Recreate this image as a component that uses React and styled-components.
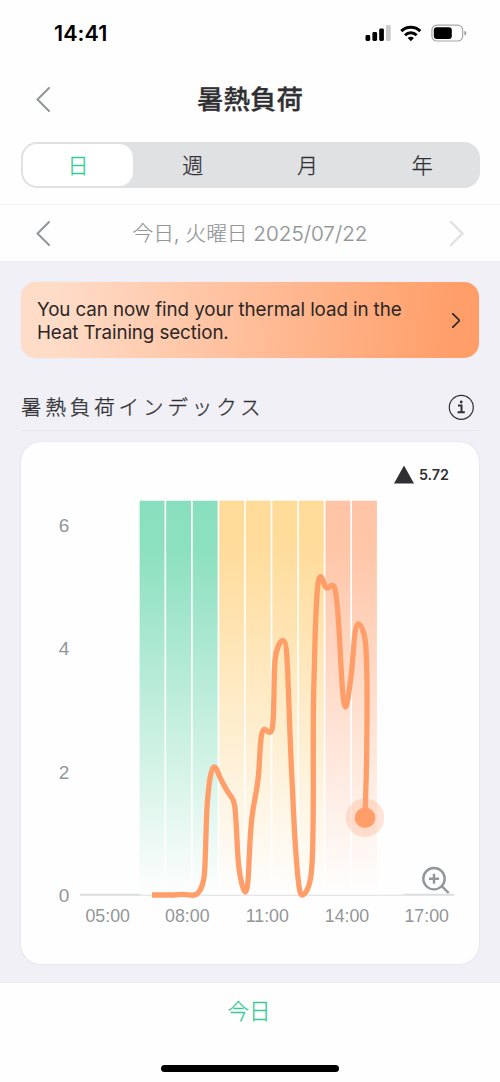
import React from 'react'
import styled, { createGlobalStyle } from 'styled-components';

const GlobalStyle = createGlobalStyle`
body {
    margin: 0;
    background: #fefefe;
    font-family: Inter, 'Noto Sans CJK JP', sans-serif;
    color: #303034;
}
`;

const Screen = styled.div`
display: flex;
flex-direction: column;
width: 500px;
height: 1082px;
overflow: hidden;
background: #fefefe;
`;

const StatusBar = styled.div`
display: flex;
justify-content: space-between;
align-items: center;
box-sizing: border-box;
height: 66px;
padding: 0 33px 0 54px;
`;

const Clock = styled.div`
font-size: 21.5px;
font-weight: 600;
line-height: 24px;
letter-spacing: 0.1px;
color: #000;
`;

const StatusIcons = styled.svg`
display: block;
width: 102px;
height: 18px;
`;

const Header = styled.header`
display: grid;
grid-template-columns: 30px 1fr 30px;
align-items: center;
height: 66px;
padding: 0 28px;
`;

const Title = styled.h1`
margin: 0;
font-size: 26.5px;
font-weight: 500;
line-height: 40px;
text-align: center;
-webkit-text-stroke: 0.3px currentColor;
`;

const IconButton = styled.button`
display: flex;
justify-content: center;
align-items: center;
width: 30px;
height: 40px;
padding: 0;
border: none;
background: none;
color: ${(props) => props.$color || "#929698"};
`;

const Segments = styled.div`
display: grid;
grid-template-columns: repeat(4, 1fr);
box-sizing: border-box;
height: 46px;
margin: 10px 20.5px 16px;
padding: 2px 0;
border-radius: 16px;
background: #dfe1e3;
`;

const Segment = styled.button`
padding: 2px 0 0;
margin: 0 2px;
border: none;
border-radius: 14px;
background: ${(props) => props.$active ? "#fff" : "transparent"};
color: ${(props) => props.$active ? "#38cb98" : "#303034"};
font-family: inherit;
font-size: 21px;
font-weight: 300;
line-height: 30px;
-webkit-text-stroke: 0.3px currentColor;
`;

const DateRow = styled.div`
display: grid;
grid-template-columns: 30px 1fr 30px;
align-items: center;
box-sizing: border-box;
height: 57px;
padding: 0 28px;
border-top: 1px solid #f0f0f3;
`;

const DateText = styled.div`
padding-top: 2px;
font-size: 20.7px;
font-weight: 300;
line-height: 30px;
text-align: center;
white-space: nowrap;
color: #929698;
-webkit-text-stroke: 0.2px currentColor;
`;

const Content = styled.main`
display: flex;
flex-direction: column;
box-sizing: border-box;
height: 722px;
padding: 21px 21px 19px;
background: #f1f0f6;
`;

const Banner = styled.div`
display: flex;
justify-content: space-between;
align-items: center;
box-sizing: border-box;
height: 76px;
padding: 0 8px 0 16px;
border-radius: 15px;
background: linear-gradient(95deg, #ffdcc8 8%, #ff9e69 94%);
box-shadow: 0 0 1px rgba(60, 50, 60, 0.15);
`;

const BannerText = styled.p`
margin: 0;
padding-top: 2px;
font-size: 18.8px;
line-height: 23px;
letter-spacing: -0.1px;
white-space: nowrap;
color: #2a2726;
`;

const SectionHead = styled.div`
display: flex;
justify-content: space-between;
align-items: center;
box-sizing: border-box;
height: 48px;
margin-top: 25px;
padding-right: 5px;
border-bottom: 1px solid #e7e7ec;
`;

const SectionTitle = styled.h2`
margin: 0;
padding-top: 2px;
font-size: 20.5px;
font-weight: 300;
line-height: 30px;
letter-spacing: 3.9px;
-webkit-text-stroke: 0.35px currentColor;
`;

const Card = styled.section`
display: flex;
flex-direction: column;
box-sizing: border-box;
height: 522px;
margin-top: 11px;
border-radius: 20px;
background: #fefefe;
box-shadow: 0 0 2px rgba(60, 60, 80, 0.14);
`;

const Peak = styled.div`
display: flex;
justify-content: flex-end;
align-items: center;
gap: 5px;
height: 28px;
margin-top: 18px;
padding-right: 30px;
font-size: 14.3px;
font-weight: 600;
`;

const Chart = styled.svg`
display: block;
width: 458px;
height: 450px;
font-family: 'Liberation Sans', sans-serif;
fill: #929698;
`;

const AxisText = styled.text`
font-size: ${(props) => props.$size || "18px"};
text-anchor: middle;
`;

const Footer = styled.footer`
display: flex;
flex-direction: column;
align-items: center;
justify-content: space-between;
box-sizing: border-box;
flex: 1;
padding: 13px 0 10px;
`;

const TodayButton = styled.button`
padding: 0;
margin-right: 2px;
border: none;
background: none;
color: #38cb98;
font-family: inherit;
font-size: 21.5px;
font-weight: 300;
line-height: 30px;
-webkit-text-stroke: 0.3px currentColor;
`;

const HomeIndicator = styled.div`
width: 178px;
height: 7px;
border-radius: 4px;
background: #000;
`;

const Chevron = ({ width = 14, height = 25, right, strokeWidth = 2 }) => {
    return (
        <svg width={width} height={height} viewBox="0 0 14 25" fill="none" stroke="currentColor" strokeWidth={strokeWidth} strokeLinecap="round">
            <path d={right ? 'M1 1l11.5 11.5L1 24' : 'M13 1L1.5 12.5 13 24'} />
        </svg>
    )
}

const PHASES = ['green', 'green', 'green', 'yellow', 'yellow', 'yellow', 'yellow', 'orange', 'orange'];
const COLORS = { green: '#88dfbe', yellow: '#ffdb98', orange: '#ffc4a5' };
const HOURS = [['05:00', 107.7], ['08:00', 187.3], ['11:00', 267.3], ['14:00', 347], ['17:00', 426.7]];
const LEVELS = [[6, 525.5], [4, 648.7], [2, 772], [0, 895]];
const PITCH = 26.55;

const LINE = `M152 895H174C178 894.5 184 894.3 188 894.8
C192 895.3 195.5 896 198 893C201.5 889 204 882 204.6 872
C206 848 206 820 207.3 803C208.5 789 210.5 766.8 214.2 766.8
C216.5 766.8 218 774 221.5 780.5C224.5 786 227 791 230 795
C233 798.5 234.2 801 235 808C237 829 237 850 238.7 866
C240 878 243.3 892 245.3 892C248.3 892 248.5 870 249.2 858
C250 840 250.7 824 252.7 812C254.5 800 257.2 789 258.5 775
C260 757 260 740 262 733C263.5 728 265.5 729 267 731
C270 733.5 271.7 732 272.5 727C274.5 713 273.5 678 275 660
C276 649 280 640.5 283 640.5C286.5 640.5 287 657 287.7 672
C289 704 290 744 292.5 790C294 824 296 862 298.5 882
C299.5 891 300.5 895 302 895C305 895 310 888 311.5 871
C315 835 312 738 314 680C315 644 315.5 600 318.2 582
C319.2 575 321.5 575 323.5 582C324.5 586 326 588.5 328 588
C330.5 586.5 332.5 583.5 334.3 587C339 597 340 662 342.5 689
C343.5 702 344.5 707 345.5 707C347.3 707 349 691 351 677
C353.5 657 354 625 358 624C360.5 624 364.5 631 365.5 643
C368 670 367 718 366.7 750C366.4 785 365.3 792 365.3 818`;

const StatusGlyphs = () => (
    <StatusIcons viewBox="365 24 102 18">
        <rect x="365.5" y="35" width="4.7" height="6" rx="1.4" />
        <rect x="372.4" y="32" width="4.7" height="9" rx="1.4" />
        <rect x="379.2" y="28.5" width="4.7" height="12.5" rx="1.4" />
        <rect x="386" y="25" width="4.7" height="16" rx="1.4" fill="#cbcbcb" />
        <g fill="none" stroke="#000" strokeWidth="3">
            <path d="M401.3 31.1a13.6 13.6 0 0 1 19 0" />
            <path d="M405 35.2a8.3 8.3 0 0 1 11.6 0" />
        </g>
        <path d="M407.7 38.1a4.4 4.4 0 0 1 6.2 0l-3.1 3.1z" />
        <rect x="431.9" y="25.2" width="30.8" height="15.8" rx="4.9" fill="none" stroke="#a6a6a6" strokeWidth="1.2" />
        <rect x="433.8" y="27.2" width="18" height="11.8" rx="3" />
        <path d="M464.4 30.7c2.6 1 2.6 3.8 0 4.8z" fill="#9a9a9a" />
    </StatusIcons>
)

const LoadChart = () => {
    return (
        <Chart viewBox="21 488 458 450">
            <defs>
                {Object.entries(COLORS).map(([name, color]) => (
                    <linearGradient key={name} id={name} x1="0" y1="0" x2="0" y2="1">
                        <stop offset="0" stopColor={color} />
                        <stop offset="0.12" stopColor={color} stopOpacity="0.97" />
                        <stop offset="1" stopColor={color} stopOpacity="0" />
                    </linearGradient>
                ))}
            </defs>
            {LEVELS.map(([level, y]) => (
                <AxisText key={level} x="64" y={y + 6.6} $size="19px">{level}</AxisText>
            ))}
            <path d="M80 894.8H140M403.5 894.8H454" stroke="#dcdddf" strokeWidth="2" />
            <path d="M140 895.2H404" stroke="#dcdddf" strokeWidth="1" />
            {PHASES.map((phase, i) => (
                <rect key={i} x={139.6 + i * PITCH} y="500.7" width="24.9" height="394" fill={`url(#${phase})`} />
            ))}
            <path d={LINE} fill="none" stroke="#ff9e69" strokeWidth="5.3" />
            <circle cx="365" cy="817.7" r="19.2" fill="#ffa77a" fillOpacity="0.3" />
            <circle cx="365" cy="817.7" r="10.3" fill="#ff9e69" />
            <g fill="none" stroke="#929698" strokeWidth="2.4">
                <circle cx="434" cy="878.7" r="10.7" />
                <path d="M441.7 886.2l7 6.8M429 878.7h10M434 873.7v10" />
            </g>
            {HOURS.map(([hour, x]) => (
                <AxisText key={hour} x={x} y="922.2" $size="17.8px">{hour}</AxisText>
            ))}
        </Chart>
    )
}

const App = () => {
    return (
        <>
            <GlobalStyle />
            <Screen>
                <StatusBar>
                    <Clock>14:41</Clock>
                    <StatusGlyphs />
                </StatusBar>
                <Header>
                    <IconButton><Chevron /></IconButton>
                    <Title>暑熱負荷</Title>
                </Header>
                <Segments>
                    <Segment $active>日</Segment>
                    <Segment>週</Segment>
                    <Segment>月</Segment>
                    <Segment>年</Segment>
                </Segments>
                <DateRow>
                    <IconButton><Chevron /></IconButton>
                    <DateText>今日, 火曜日 2025/07/22</DateText>
                    <IconButton $color="#dfe1e3"><Chevron right strokeWidth={2.4} /></IconButton>
                </DateRow>
                <Content>
                    <Banner>
                        <BannerText>You can now find your thermal load in the<br />Heat Training section.</BannerText>
                        <IconButton as="span" $color="#2a2726"><Chevron right width={8.5} height={15} strokeWidth={2.8} /></IconButton>
                    </Banner>
                    <SectionHead>
                        <SectionTitle>暑熱負荷インデックス</SectionTitle>
                        <svg width="26" height="26" viewBox="0 0 26 26" fill="none" stroke="#303034">
                            <circle cx="13.3" cy="13.3" r="12" strokeWidth="1.2" />
                            <path d="M10 11.5h3.5v6.3M9.6 18.2h7.2" strokeWidth="2" />
                            <circle cx="13.2" cy="8" r="1.4" fill="#303034" stroke="none" />
                        </svg>
                    </SectionHead>
                    <Card>
                        <Peak>
                            <svg width="20" height="19" viewBox="0 0 20 19"><path d="M10 0.5l10 18H0z" fill="#303034" /></svg>
                            5.72
                        </Peak>
                        <LoadChart />
                    </Card>
                </Content>
                <Footer>
                    <TodayButton>今日</TodayButton>
                    <HomeIndicator />
                </Footer>
            </Screen>
        </>
    )
}

export default App;
